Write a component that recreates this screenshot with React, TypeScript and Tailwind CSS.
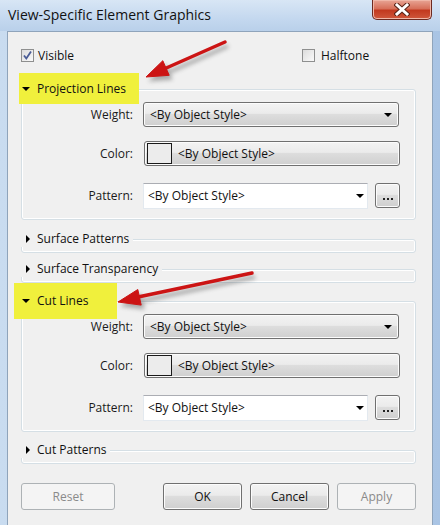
import React from 'react';

const font = "font-['Open_Sans',sans-serif]";

function Triangle({ open }: { open: boolean }) {
  return (
    <div className="flex w-[7px] justify-end">
      {open ? (
        <div className="h-0 w-0 border-x-[4px] border-t-[4px] border-x-transparent border-t-black" />
      ) : (
        <div className="h-0 w-0 border-y-[4px] border-l-[4px] border-y-transparent border-l-black" />
      )}
    </div>
  );
}

function Header({ label, open, mark }: { label: string; open: boolean; mark?: string }) {
  return (
    <div className="relative z-10 flex h-4 items-center">
      {mark && <div className={`absolute bg-[#f0f03c] ${mark}`} />}
      <div className={`relative z-10 flex h-4 items-center gap-[7px] pl-[2px] pr-1 ${mark ? '' : 'bg-[#f0f0f0]'}`}>
        <Triangle open={open} />
        <span className="text-[12px] leading-none text-[#111]">{label}</span>
      </div>
    </div>
  );
}

function Arrow() {
  return (
    <div className="flex h-full w-[14px] items-center justify-center">
      <div className="h-0 w-0 border-x-[4px] border-t-[4px] border-x-transparent border-t-black" />
    </div>
  );
}

function Row({ label, children }: { label: string; children: React.ReactNode }) {
  return (
    <div className="flex items-center">
      <div className="w-[111px] text-right text-[12px] text-[#1a1a1a]">{label}</div>
      <div className="ml-[10px] flex">{children}</div>
    </div>
  );
}

const gradBtn =
  'bg-[linear-gradient(#f3f3f3,#ebebeb_45%,#dddddd_50%,#cfcfcf)] border border-[#707070] rounded-[3px] shadow-[inset_0_0_0_1px_#fcfcfc]';

function LineGroup() {
  return (
    <div className="-mt-2 rounded-[3px] border border-[#d5dfe5] pt-[12px] pb-[10px] shadow-[inset_0_0_0_1px_#fff]">
      <Row label="Weight:">
        <div className={`flex h-[25px] w-[256px] items-center justify-between pl-[6px] pr-[6px] ${gradBtn}`}>
          <span className="text-[12px] text-[#111]">&lt;By Object Style&gt;</span>
          <div className="h-0 w-0 border-x-[4px] border-t-[4px] border-x-transparent border-t-black" />
        </div>
      </Row>
      <div className="mt-[14px]">
        <Row label="Color:">
          <div className={`ml-px flex h-[25px] w-[256px] items-center pl-[2px] ${gradBtn}`}>
            <div className="h-[21px] w-[25px] border border-[#1a1a1a] bg-[#ececec]" />
            <span className="ml-[6px] text-[12px] text-[#111]">&lt;By Object Style&gt;</span>
          </div>
        </Row>
      </div>
      <div className="mt-[17px]">
        <Row label="Pattern:">
          <div className="flex h-[26px] w-[225px] items-center justify-between border border-[#e3e9ef] border-t-[#abadb3] bg-white pl-[4px]">
            <span className="text-[12px] text-[#111]">&lt;By Object Style&gt;</span>
            <Arrow />
          </div>
          <div className={`ml-[7px] flex h-[25px] w-[25px] items-end justify-center gap-[2px] pb-[7px] ${gradBtn}`}>
            <div className="h-[2px] w-[2px] bg-[#222]" />
            <div className="h-[2px] w-[2px] bg-[#222]" />
            <div className="h-[2px] w-[2px] bg-[#222]" />
          </div>
        </Row>
      </div>
    </div>
  );
}

function Collapsed() {
  return <div className="-mt-2 h-[14px] rounded-[3px] border border-[#d5dfe5] shadow-[inset_0_0_0_1px_#fff]" />;
}

function Button({ label, disabled, w }: { label: string; disabled?: boolean; w: string }) {
  return (
    <div
      className={`flex h-[27px] items-center justify-center rounded-[3px] text-[12px] ${w} ${
        disabled ? 'border border-[#adb2b5] bg-[#f4f4f4] text-[#8a8a8a]' : `${gradBtn} text-[#111]`
      }`}
    >
      {label}
    </div>
  );
}

export default function App() {
  return (
    <div className={`relative flex h-[525px] w-[440px] flex-col overflow-hidden bg-[linear-gradient(90deg,#c9dcf0,#b8d0ea_50%,#a9c4e4)] ${font}`}>
      {/* Title bar */}
      <div className="flex h-[31px] items-start justify-between bg-[linear-gradient(#d8e6f5,#c4d8ef_60%,#b9d0ea)]">
        <span className="ml-[8px] mt-[5px] text-[14px] leading-5 text-[#111]">View-Specific Element Graphics</span>
        <div className="mr-[8px] flex h-[20px] w-[60px] items-center justify-center rounded-b-[5px] border border-t-0 border-[#6d2a20] bg-[linear-gradient(#e8a595,#d7705a_45%,#c2391f_55%,#d0583c)] shadow-[inset_0_0_0_1px_#f0b7a8]">
          <svg width="16" height="13" viewBox="0 0 16 13">
            <path d="M3 2 L13 11 M13 2 L3 11" stroke="#5a2418" strokeWidth="5" strokeLinecap="square" />
            <path d="M3 2 L13 11 M13 2 L3 11" stroke="#fff" strokeWidth="3" strokeLinecap="square" />
          </svg>
        </div>
      </div>

      {/* Client area */}
      <div className="mx-[7px] flex-1 border border-b-0 border-[#8fa4bb] bg-[#f0f0f0] pl-[13px] pr-[16px] text-[12px]">
        {/* Checkboxes */}
        <div className="mt-[17px] flex h-[13px] items-center">
          <div className="flex w-[281px] items-center">
            <div className="flex h-[13px] w-[13px] items-center justify-center border border-[#8e8f8f] bg-[linear-gradient(135deg,#dcdcdc,#fafafa)]">
              <svg width="11" height="11" viewBox="0 0 11 11">
                <path d="M2 5.5 L4.3 8.5 L9 1.5" fill="none" stroke="#4a5c96" strokeWidth="1.8" />
              </svg>
            </div>
            <span className="ml-[4px] text-[12px] text-[#111]">Visible</span>
          </div>
          <div className="flex items-center">
            <div className="h-[13px] w-[13px] border border-[#8e8f8f] bg-[linear-gradient(135deg,#dcdcdc,#fafafa)]" />
            <span className="ml-[6px] text-[12px] text-[#111]">Halftone</span>
          </div>
        </div>

        {/* Projection Lines */}
        <div className="mt-[19px]">
          <Header label="Projection Lines" open mark="-left-[2px] -top-2 h-[31px] w-[120px]" />
          <LineGroup />
        </div>

        {/* Surface Patterns */}
        <div className="mt-[11px]">
          <Header label="Surface Patterns" open={false} />
          <Collapsed />
        </div>

        {/* Surface Transparency */}
        <div className="mt-[8px]">
          <Header label="Surface Transparency" open={false} />
          <Collapsed />
        </div>

        {/* Cut Lines */}
        <div className="mt-[10px]">
          <Header label="Cut Lines" open mark="-left-[7px] -top-[10px] h-[36px] w-[103px]" />
          <LineGroup />
        </div>

        {/* Cut Patterns */}
        <div className="mt-[10px]">
          <Header label="Cut Patterns" open={false} />
          <Collapsed />
        </div>

        {/* Buttons */}
        <div className="mt-[19px] flex items-center">
          <Button label="Reset" disabled w="w-[95px]" />
          <div className="ml-[48px] flex gap-[8px]">
            <Button label="OK" w="w-[79px]" />
            <Button label="Cancel" w="w-[79px]" />
            <Button label="Apply" disabled w="w-[79px]" />
          </div>
        </div>
      </div>

      {/* Annotation arrows */}
      <svg className="pointer-events-none absolute inset-0" width="440" height="525" viewBox="0 0 440 525">
        <defs>
          <filter id="sh" x="-20%" y="-50%" width="140%" height="200%">
            <feGaussianBlur stdDeviation="2" />
          </filter>
        </defs>
        <g transform="translate(3 4)" opacity="0.45" filter="url(#sh)" fill="#555" stroke="#555">
          <line x1="225" y1="42" x2="164" y2="69" strokeWidth="4" />
          <polygon points="146,77 162.8,60.7 169.2,75.3" />
          <line x1="252" y1="273" x2="138" y2="297" strokeWidth="4" />
          <polygon points="118,302 137.8,289.5 141.2,305.1" />
        </g>
        <g fill="#cc1414" stroke="#cc1414">
          <line x1="225" y1="42" x2="164" y2="69" strokeWidth="3.5" strokeLinecap="round" />
          <polygon points="146,77 162.8,60.7 169.2,75.3" strokeWidth="1" strokeLinejoin="round" />
          <line x1="252" y1="273" x2="138" y2="297" strokeWidth="3.5" strokeLinecap="round" />
          <polygon points="118,302 137.8,289.5 141.2,305.1" strokeWidth="1" strokeLinejoin="round" />
        </g>
      </svg>
    </div>
  );
}
